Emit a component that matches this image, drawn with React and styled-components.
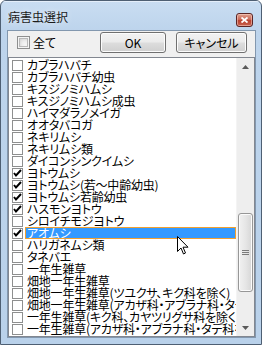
import React from 'react';
import styled, { createGlobalStyle } from 'styled-components';

const GlobalStyle = createGlobalStyle`
  html, body {
    margin: 0;
    padding: 0;
    background: #ffffff;
  }
  body {
    font-family: "Noto Sans CJK JP", "Liberation Sans", sans-serif;
    font-size: 12px;
  }
`;

const Window = styled.div`
  position: relative;
  box-sizing: border-box;
  width: 262px;
  height: 345px;
  border: 1px solid #4e5f73;
  border-radius: 6px 6px 0 0;
  background: linear-gradient(#c9ddf2 0px, #bdd4ec 30px, #b9d1ea 100%);
  display: flex;
  flex-direction: column;
  overflow: hidden;
`;

const TitleBar = styled.div`
  height: 29px;
  display: flex;
  align-items: center;
  padding: 0 7px 0 7px;
  box-shadow: inset 0 1px 0 #e4eefa;
`;

const Title = styled.span`
  flex: 1;
  font-size: 12px;
  line-height: 14px;
  color: #1b1b1b;
  font-feature-settings: "palt";
  margin-top: 3px;
  text-shadow: 0 0 6px rgba(255, 255, 255, 0.8);
`;

const CloseButton = styled.div`
  box-sizing: border-box;
  width: 17px;
  height: 14px;
  margin-top: 9px;
  margin-right: 1px;
  border: 1px solid #5b2525;
  border-radius: 3px;
  background: linear-gradient(#e0a190 0%, #cb6a5a 45%, #b9412f 55%, #c8624f 100%);
  box-shadow: inset 0 0 0 1px rgba(255, 220, 210, 0.5);
  display: flex;
  align-items: center;
  justify-content: center;
`;

const Client = styled.div`
  flex: 1;
  margin: 0 5px 6px 6px;
  border: 1px solid #8297ae;
  background: #f0f0f0;
  display: flex;
  flex-direction: column;
  min-height: 0;
`;

const Toolbar = styled.div`
  display: flex;
  align-items: center;
  padding: 1px 8px 4px 9px;
  height: 21px;
`;

const AllLabel = styled.label`
  display: flex;
  align-items: center;
  gap: 3px;
  color: #000;
  font-feature-settings: "palt";
  line-height: 14px;
`;

const BigBox = styled.span`
  box-sizing: border-box;
  width: 13px;
  height: 13px;
  border: 1px solid #8e8f8f;
  background: #f4f4f4;
  box-shadow: inset 0 0 0 1px #f4f4f4, inset 0 0 0 2px #b9b9b9, inset 2px 2px 4px #c8c8c8;
`;

const Spacer = styled.div`
  flex: 1;
`;

const Button = styled.div`
  box-sizing: border-box;
  width: ${({ $w }) => $w}px;
  height: 21px;
  margin-left: ${({ $gap }) => $gap || 0}px;
  border: 1px solid #707070;
  border-radius: 3px;
  background: linear-gradient(#f2f2f2 0%, #ebebeb 48%, #dddddd 52%, #cfcfcf 100%);
  box-shadow: inset 0 0 0 1px #fcfcfc;
  display: flex;
  align-items: center;
  justify-content: center;
  color: #000;
  font-size: 12px;
  line-height: 14px;
  font-feature-settings: "palt";
`;

const List = styled.div`
  flex: 1;
  min-height: 0;
  border: 1px solid #828790;
  background: #ffffff;
  display: flex;
`;

const Items = styled.div`
  flex: 1;
  overflow: hidden;
  padding-top: 1px;
`;

const Row = styled.div`
  height: 12px;
  display: flex;
  align-items: center;
  padding-left: 3px;
  white-space: nowrap;
`;

const SmallBox = styled.span`
  flex: none;
  box-sizing: border-box;
  width: 11px;
  height: 11px;
  border: 1px solid #8e8f8f;
  background: #fff;
  display: flex;
  align-items: center;
  justify-content: center;
`;

const Label = styled.span`
  box-sizing: border-box;
  flex: 1;
  height: 12px;
  margin-left: 2px;
  padding-left: 1px;
  font-size: 12px;
  line-height: 10px;
  font-feature-settings: "palt";
  letter-spacing: -0.2px;
  color: ${({ $selected }) => ($selected ? '#ffffff' : '#000000')};
  background: ${({ $selected }) => ($selected ? '#3399ff' : 'transparent')};
  border: 1px dotted ${({ $selected }) => ($selected ? '#2a1a00' : 'transparent')};
  outline: ${({ $selected }) => ($selected ? '1px solid #f0a030' : 'none')};
  outline-offset: -1px;
`;

const ScrollBar = styled.div`
  width: 17px;
  background: #eeeeee;
  border-left: 1px solid #f4f4f4;
  display: flex;
  flex-direction: column;
`;

const Arrow = styled.div`
  height: 17px;
  display: flex;
  align-items: center;
  justify-content: center;
`;

const Track = styled.div`
  flex: 1;
  padding-top: ${({ $offset }) => $offset}px;
`;

const Thumb = styled.div`
  box-sizing: border-box;
  height: ${({ $size }) => $size}px;
  margin: 0 1px;
  border: 1px solid #979797;
  border-radius: 3px;
  background: linear-gradient(90deg, #f1f1f1 0%, #e6e6e6 50%, #d6d6d6 100%);
  box-shadow: inset 0 0 0 1px #fbfbfb;
  display: flex;
  align-items: center;
  justify-content: center;
`;

const Pointer = styled.svg`
  position: absolute;
  left: 176px;
  top: 235px;
`;

const items = [
  { name: 'カブラハバチ' },
  { name: 'カブラハバチ幼虫' },
  { name: 'キスジノミハムシ' },
  { name: 'キスジノミハムシ成虫' },
  { name: 'ハイマダラノメイガ' },
  { name: 'オオタバコガ' },
  { name: 'ネキリムシ' },
  { name: 'ネキリムシ類' },
  { name: 'ダイコンシンクイムシ' },
  { name: 'ヨトウムシ', checked: true },
  { name: 'ヨトウムシ(若〜中齢幼虫)', checked: true },
  { name: 'ヨトウムシ若齢幼虫', checked: true },
  { name: 'ハスモンヨトウ', checked: true },
  { name: 'シロイチモジヨトウ' },
  { name: 'アオムシ', checked: true, selected: true },
  { name: 'ハリガネムシ類' },
  { name: 'タネバエ' },
  { name: '一年生雑草' },
  { name: '畑地一年生雑草' },
  { name: '畑地一年生雑草(ツユクサ、キク科を除く)' },
  { name: '畑地一年生雑草(アカザ科・アブラナ科・タデ科を除く)' },
  { name: '一年生雑草(キク科、カヤツリグサ科を除く)' },
  { name: '一年生雑草(アカザ科・アブラナ科・タデ科を除く)' },
];

const Check = () => (
  <svg width="9" height="9" viewBox="0 0 9 9">
    <path d="M1 4 L3 6.5 L8 1" fill="none" stroke="#000" strokeWidth="2" />
  </svg>
);

export default function App() {
  return (
    <>
      <GlobalStyle />
      <Window>
        <TitleBar>
          <Title>病害虫選択</Title>
          <CloseButton>
            <svg width="7" height="6" viewBox="0 0 7 6">
              <path d="M0.5 0.5 L6.5 5.5 M6.5 0.5 L0.5 5.5" stroke="#fff" strokeWidth="1.8" />
            </svg>
          </CloseButton>
        </TitleBar>
        <Client>
          <Toolbar>
            <AllLabel>
              <BigBox />
              全て
            </AllLabel>
            <Spacer />
            <Button $w={66}>OK</Button>
            <Button $w={71} $gap={10}>キャンセル</Button>
          </Toolbar>
          <List>
            <Items>
              {items.map((it) => (
                <Row key={it.name}>
                  <SmallBox>{it.checked && <Check />}</SmallBox>
                  <Label $selected={it.selected}>{it.name}</Label>
                </Row>
              ))}
            </Items>
            <ScrollBar>
              <Arrow>
                <svg width="7" height="4" viewBox="0 0 7 4">
                  <path d="M0 4 L3.5 0 L7 4 Z" fill="#5a5a5a" />
                </svg>
              </Arrow>
              <Track $offset={138}>
                <Thumb $size={79}>
                  <svg width="7" height="7" viewBox="0 0 7 7">
                    <path d="M0 1.5 H7 M0 3.5 H7 M0 5.5 H7" stroke="#7a7a7a" strokeWidth="1" />
                  </svg>
                </Thumb>
              </Track>
              <Arrow>
                <svg width="7" height="4" viewBox="0 0 7 4">
                  <path d="M0 0 L3.5 4 L7 0 Z" fill="#5a5a5a" />
                </svg>
              </Arrow>
            </ScrollBar>
          </List>
        </Client>
        <Pointer width="12" height="19" viewBox="0 0 12 19">
          <path
            d="M0.5 0.5 L0.5 15.5 L4 12 L6.5 18 L8.5 17 L6 11.2 L11 11.2 Z"
            fill="#fff"
            stroke="#000"
            strokeWidth="1"
            strokeLinejoin="miter"
          />
        </Pointer>
      </Window>
    </>
  );
}
